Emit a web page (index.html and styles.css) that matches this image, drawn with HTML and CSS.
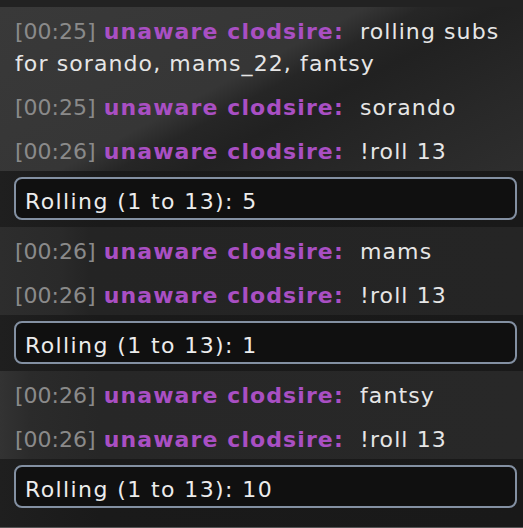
FILE: index.html
```html
<!DOCTYPE html>
<html>
<head>
<meta charset="utf-8">
<link rel="stylesheet" href="styles.css">
</head>
<body>
<div class="chat">
  <div class="topbar"></div>
  <div class="group g1">
    <div class="msg"><span class="ts">[00:25]</span> <span class="user">unaware clodsire:</span>&nbsp; <span class="text">rolling subs for sorando, mams_22, fantsy</span></div>
    <div class="msg"><span class="ts">[00:25]</span> <span class="user">unaware clodsire:</span>&nbsp; <span class="text">sorando</span></div>
    <div class="msg"><span class="ts">[00:26]</span> <span class="user">unaware clodsire:</span>&nbsp; <span class="text">!roll 13</span></div>
  </div>
  <div class="roll"><div class="box">Rolling (1 to 13): 5</div></div>
  <div class="group g2">
    <div class="msg"><span class="ts">[00:26]</span> <span class="user">unaware clodsire:</span>&nbsp; <span class="text">mams</span></div>
    <div class="msg"><span class="ts">[00:26]</span> <span class="user">unaware clodsire:</span>&nbsp; <span class="text">!roll 13</span></div>
  </div>
  <div class="roll"><div class="box">Rolling (1 to 13): 1</div></div>
  <div class="group g3">
    <div class="msg"><span class="ts">[00:26]</span> <span class="user">unaware clodsire:</span>&nbsp; <span class="text">fantsy</span></div>
    <div class="msg"><span class="ts">[00:26]</span> <span class="user">unaware clodsire:</span>&nbsp; <span class="text">!roll 13</span></div>
  </div>
  <div class="roll last"><div class="box">Rolling (1 to 13): 10</div></div>
</div>
</body>
</html>
```
FILE: styles.css
```css
html, body {
  margin: 0;
  padding: 0;
  background: #1b1b1b;
}
.chat {
  width: 523px;
  height: 528px;
  overflow: hidden;
  font-family: "DejaVu Sans", Verdana, sans-serif;
  font-size: 22px;
  line-height: 32px;
  letter-spacing: 1.1px;
  color: #e2e2e2;
}
.topbar {
  height: 7px;
  background: #222;
}
.group {
  padding: 0 6px 0 15px;
}
.g1 {
  background: linear-gradient(152deg, #393939 0%, #363636 44%, #262626 51%, #212121 60%, #282828 80%, #2e2e2e 100%);
}
.g2 {
  background: linear-gradient(90deg, #2d2d2d 0, #2a2a2a 60px, #242424 90px, #252525 100%);
}
.g3 {
  background: linear-gradient(90deg, #333 0, #2b2b2b 30px, #272727 100px, #282828 100%);
}
.msg {
  padding: 9px 0 3px;
}
.ts {
  color: #8a8a8a;
  letter-spacing: 0;
}
.user {
  color: #a94fc3;
  font-weight: bold;
}
.text {
  color: #e6e6e6;
}
.roll {
  background: linear-gradient(90deg, #1f1f1f 0, #1a1a1a 100px, #191919 100%);
  padding: 6px 6px 7px 14px;
}
.roll.last {
  padding-bottom: 19px;
  border-bottom: 1px solid #555;
}
.box {
  height: 33px;
  border: 2px solid #8390a2;
  border-radius: 8px;
  background: #101010;
  padding: 6px 9px 0;
  line-height: 33px;
  letter-spacing: 1.4px;
  color: #ececec;
}
```
